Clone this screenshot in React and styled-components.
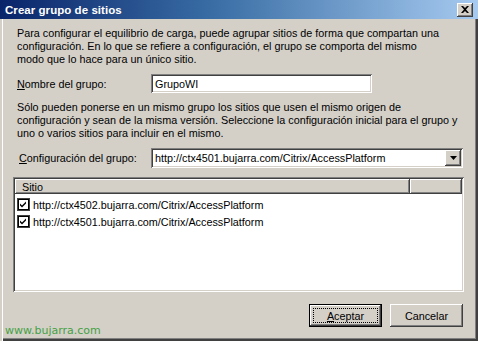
import React from 'react';
import styled, { createGlobalStyle } from 'styled-components';

const GlobalStyle = createGlobalStyle`
  html, body {
    margin: 0;
    padding: 0;
    background: #d4d0c8;
  }
  body {
    font-family: "Liberation Sans", Arial, sans-serif;
  }
`;

const raised = `
  box-shadow: inset -1px -1px #404040, inset 1px 1px #ffffff,
    inset -2px -2px #808080, inset 2px 2px #d4d0c8;
`;

const sunken = `
  box-shadow: inset 1px 1px #808080, inset -1px -1px #ffffff,
    inset 2px 2px #404040, inset -2px -2px #d4d0c8;
`;

const Window = styled.div`
  width: 478px;
  height: 341px;
  box-sizing: border-box;
  display: flex;
  flex-direction: column;
  background: #d4d0c8;
  color: #000;
  font-size: 10.8px;
  box-shadow: inset 2px 0 #d4d0c8, inset 3px 0 #ffffff, inset -2px -2px #404040,
    inset -3px -3px #808080;
  overflow: hidden;
`;

const TitleBar = styled.div`
  height: 19px;
  flex: 0 0 19px;
  display: flex;
  align-items: center;
  justify-content: space-between;
  padding: 0 5px 0 5px;
  background: linear-gradient(to right, #0a246a 0%, #3a6ea5 45%, #a6caf0 100%);
`;

const Title = styled.span`
  color: #fff;
  font-weight: bold;
  font-size: 11.5px;
  letter-spacing: 0.05px;
`;

const CloseButton = styled.div`
  width: 16px;
  height: 14px;
  display: flex;
  align-items: center;
  justify-content: center;
  background: #d4d0c8;
  ${raised}
`;

const Body = styled.div`
  flex: 1;
  display: flex;
  flex-direction: column;
  padding: 8px 14px 0 13px;
`;

const Paragraph = styled.p`
  margin: ${(p) => p.$top || 0}px 0 0 4px;
  line-height: 13px;
  white-space: nowrap;
`;

const FieldRow = styled.div`
  display: flex;
  align-items: center;
  margin-top: 8px;
  padding-left: ${(p) => p.$indent}px;
`;

const Label = styled.label`
  flex: 0 0 ${(p) => p.$width}px;
`;

const Key = styled.span`
  text-decoration: underline;
  text-underline-offset: 1px;
`;

const TextBox = styled.div`
  width: 221px;
  height: 19px;
  box-sizing: border-box;
  padding: 0 4px;
  display: flex;
  align-items: center;
  background: #fff;
  ${sunken}
`;

const Select = styled.div`
  width: 312px;
  height: 20px;
  box-sizing: border-box;
  padding: 2px 2px 2px 4px;
  display: flex;
  align-items: center;
  justify-content: space-between;
  background: #fff;
  ${sunken}
`;

const DropButton = styled.div`
  width: 16px;
  height: 16px;
  display: flex;
  align-items: center;
  justify-content: center;
  background: #d4d0c8;
  ${raised}
`;

const ListBox = styled.div`
  margin-top: 9px;
  height: 115px;
  box-sizing: border-box;
  padding: 2px;
  background: #fff;
  display: flex;
  flex-direction: column;
  ${sunken}
`;

const Header = styled.div`
  display: flex;
  height: 15px;
  flex: 0 0 15px;
`;

const HeaderCell = styled.div`
  ${(p) => (p.$grow ? 'flex: 1;' : `flex: 0 0 ${p.$width}px;`)}
  box-sizing: border-box;
  padding-left: 7px;
  display: flex;
  align-items: center;
  background: #d4d0c8;
  ${raised}
`;

const Rows = styled.div`
  padding-top: 2px;
`;

const Row = styled.div`
  display: flex;
  align-items: center;
  height: 17px;
  padding-left: 2px;
  gap: 3px;
`;

const Footer = styled.div`
  display: flex;
  justify-content: space-between;
  margin: 12px 1px 0 -8px;
  flex: 1;
`;

const Watermark = styled.span`
  align-self: flex-end;
  margin-bottom: 4px;
  font-family: "DejaVu Sans", Verdana, sans-serif;
  font-size: 11px;
  color: #45a045;
`;

const Buttons = styled.div`
  display: flex;
  gap: 8px;
  align-items: flex-start;
`;

const Button = styled.div`
  width: 73px;
  height: 23px;
  box-sizing: border-box;
  display: flex;
  align-items: center;
  justify-content: center;
  background: #d4d0c8;
  position: relative;
  ${(p) =>
    p.$default
      ? `border: 1px solid #000;
         box-shadow: inset -1px -1px #404040, inset 1px 1px #ffffff,
           inset -2px -2px #808080;`
      : raised}
`;

const Focus = styled.span`
  position: absolute;
  inset: 3px;
  border: 1px dotted #000;
`;

const CloseGlyph = () => (
  <svg width="8" height="7" viewBox="0 0 8 7">
    <path d="M0 0h2l2 2 2-2h2L5 3.5 8 7H6L4 5 2 7H0l3-3.5z" fill="#000" />
  </svg>
);

const ArrowGlyph = () => (
  <svg width="7" height="4" viewBox="0 0 7 4">
    <path d="M0 0h7L3.5 4z" fill="#000" />
  </svg>
);

const CheckBox = () => (
  <svg width="13" height="13" viewBox="0 0 13 13">
    <rect x="0" y="0" width="13" height="13" fill="#404040" />
    <rect x="1" y="1" width="11" height="11" fill="#000" />
    <rect x="2" y="2" width="9" height="9" fill="#fff" />
    <path d="M3 5.5l2 2 4-4v2l-4 4-2-2z" fill="#000" />
  </svg>
);

const sites = [
  'http://ctx4502.bujarra.com/Citrix/AccessPlatform',
  'http://ctx4501.bujarra.com/Citrix/AccessPlatform',
];

export default function App() {
  return (
    <>
      <GlobalStyle />
      <Window>
        <TitleBar>
          <Title>Crear grupo de sitios</Title>
          <CloseButton>
            <CloseGlyph />
          </CloseButton>
        </TitleBar>
        <Body>
          <Paragraph>
            Para configurar el equilibrio de carga, puede agrupar sitios de forma que compartan una
            <br />
            configuración. En lo que se refiere a configuración, el grupo se comporta del mismo
            <br />
            modo que lo hace para un único sitio.
          </Paragraph>
          <FieldRow $indent={4}>
            <Label $width={134}>
              <Key>N</Key>ombre del grupo:
            </Label>
            <TextBox>GrupoWI</TextBox>
          </FieldRow>
          <Paragraph $top={8}>
            Sólo pueden ponerse en un mismo grupo los sitios que usen el mismo origen de
            <br />
            configuración y sean de la misma versión. Seleccione la configuración inicial para el grupo y
            <br />
            uno o varios sitios para incluir en el mismo.
          </Paragraph>
          <FieldRow $indent={6}>
            <Label $width={132}>
              <Key>C</Key>onfiguración del grupo:
            </Label>
            <Select>
              <span>http://ctx4501.bujarra.com/Citrix/AccessPlatform</span>
              <DropButton>
                <ArrowGlyph />
              </DropButton>
            </Select>
          </FieldRow>
          <ListBox>
            <Header>
              <HeaderCell $width={395}>Sitio</HeaderCell>
              <HeaderCell $grow />
            </Header>
            <Rows>
              {sites.map((s) => (
                <Row key={s}>
                  <CheckBox />
                  <span>{s}</span>
                </Row>
              ))}
            </Rows>
          </ListBox>
          <Footer>
            <Watermark>www.bujarra.com</Watermark>
            <Buttons>
              <Button $default>
                <Focus />
                <span>
                  <Key>A</Key>ceptar
                </span>
              </Button>
              <Button>Cancelar</Button>
            </Buttons>
          </Footer>
        </Body>
      </Window>
    </>
  );
}
